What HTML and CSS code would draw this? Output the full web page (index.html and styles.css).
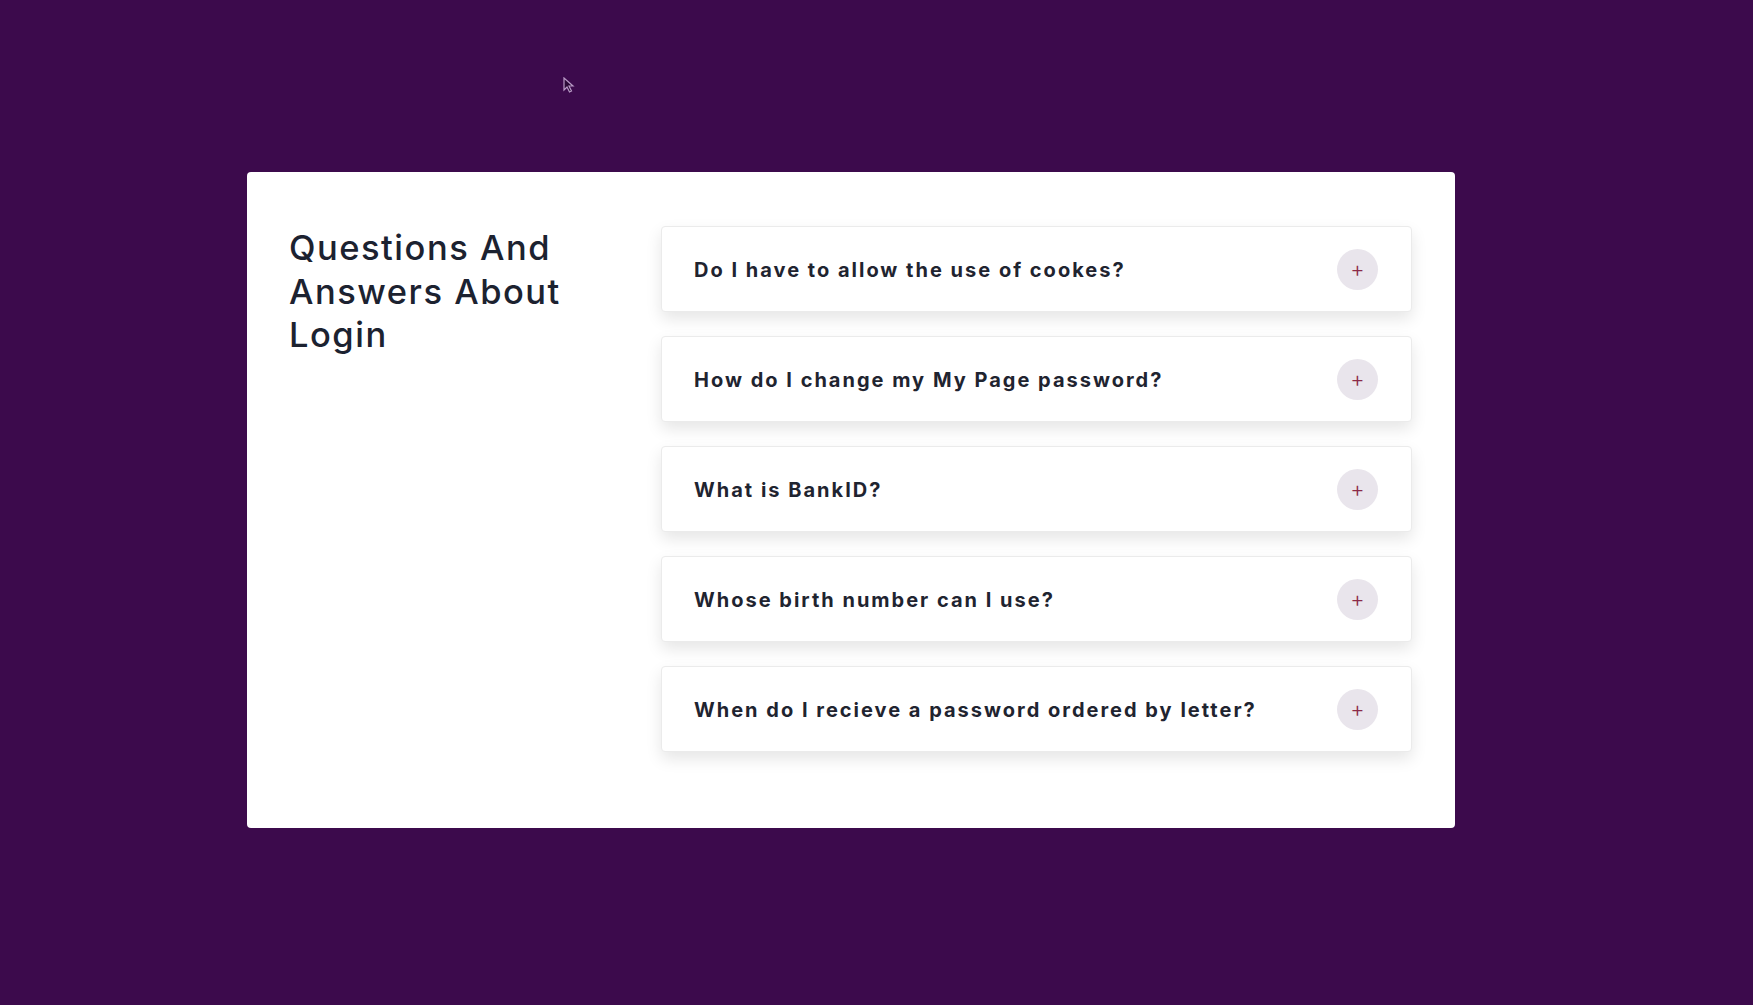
FILE: index.html
```html
<!DOCTYPE html>
<html lang="en">
<head>
<meta charset="utf-8">
<title>FAQ</title>
<link rel="stylesheet" href="styles.css">
</head>
<body>
<svg class="cursor" width="12" height="16" viewBox="0 0 12 16"><path d="M1 1 L1 13 L4 10 L6.5 15 L8.5 14 L6 9 L10 9 Z" fill="#2a0a36" stroke="#b99ac6" stroke-width="1.2"/></svg>
<main class="card">
  <h1 class="title">Questions And Answers About Login</h1>
  <div class="list">
    <div class="item"><span class="q">Do I have to allow the use of cookes?</span><span class="btn">+</span></div>
    <div class="item"><span class="q">How do I change my My Page password?</span><span class="btn">+</span></div>
    <div class="item"><span class="q">What is BankID?</span><span class="btn">+</span></div>
    <div class="item"><span class="q">Whose birth number can I use?</span><span class="btn">+</span></div>
    <div class="item"><span class="q">When do I recieve a password ordered by letter?</span><span class="btn">+</span></div>
  </div>
</main>
</body>
</html>
```
FILE: styles.css
```css
html, body {
  margin: 0;
  padding: 0;
}
body {
  background: #3c0a4c;
  width: 1753px;
  height: 1005px;
  font-family: Inter, "Noto Sans", sans-serif;
  position: relative;
  overflow: hidden;
  padding-top: 172px;
  box-sizing: border-box;
}
.cursor {
  position: absolute;
  left: 563px;
  top: 77px;
}
.card {
  margin-left: 247px;
  width: 1208px;
  height: 656px;
  background: #ffffff;
  border-radius: 4px;
  box-sizing: border-box;
  padding: 54px 43px 0 42px;
  display: flex;
  align-items: flex-start;
}
.title {
  margin: 0 72px 0 0;
  width: 300px;
  flex: none;
  font-size: 34.5px;
  line-height: 43.5px;
  font-weight: 500;
  color: #1c2230;
  letter-spacing: 1.5px;
}
.list {
  flex: 1;
  display: flex;
  flex-direction: column;
  gap: 24px;
}
.item {
  height: 86px;
  box-sizing: border-box;
  border: 1px solid #ebebeb;
  border-radius: 4px;
  background: #fff;
  box-shadow: 0 7px 16px rgba(0, 0, 0, 0.1);
  display: flex;
  align-items: center;
  justify-content: space-between;
  padding: 0 33px 0 32px;
}
.q {
  font-size: 20px;
  font-weight: 700;
  letter-spacing: 2px;
  color: #1f2430;
  padding-top: 2px;
}
.btn {
  width: 41px;
  height: 41px;
  border-radius: 50%;
  background: #e9e5ec;
  color: #8c2a48;
  display: flex;
  align-items: center;
  justify-content: center;
  font-size: 22px;
  font-weight: 300;
  line-height: 1;
}
```
